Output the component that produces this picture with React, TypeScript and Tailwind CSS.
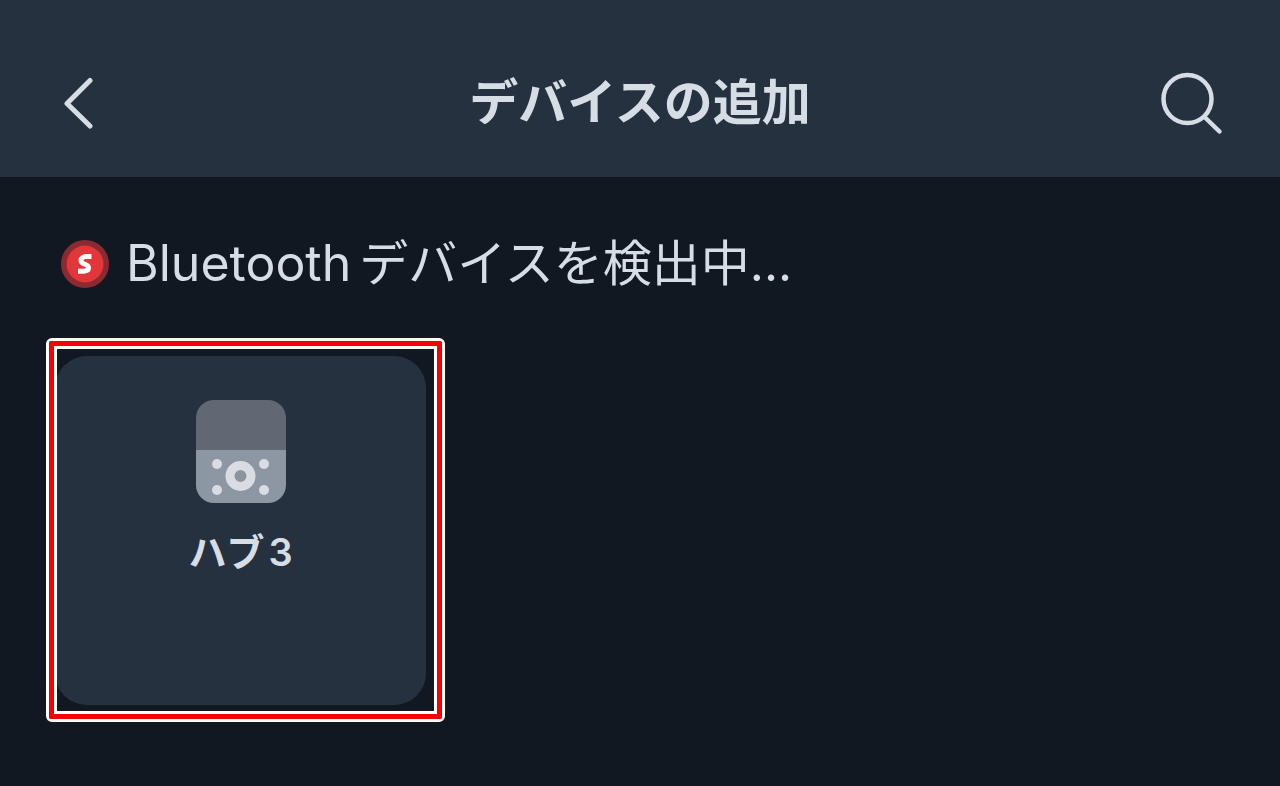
type Device = { id: string; name: string; model: string }

const DEVICES: Device[] = [{ id: 'hub-3', name: 'ハブ', model: '3' }]

function BackIcon() {
  return (
    <svg width="32" height="52" viewBox="0 0 32 52" fill="none" aria-hidden="true">
      <path d="M28 3.500 5 26.500 28 49" stroke="currentColor" strokeWidth="5" strokeLinecap="round" strokeLinejoin="round" />
    </svg>
  )
}

function SearchIcon() {
  return (
    <svg width="64" height="64" viewBox="0 0 64 64" fill="none" aria-hidden="true">
      <circle cx="27.500" cy="28" r="24" stroke="currentColor" strokeWidth="4.500" />
      <path d="M44.500 46 59.500 60.500" stroke="currentColor" strokeWidth="4.500" strokeLinecap="round" />
    </svg>
  )
}

// Pulsing scan badge
function ScanBadge() {
  return (
    <svg width="50" height="50" viewBox="0 0 50 50" aria-hidden="true" className="shrink-0">
      <circle cx="25" cy="25" r="24" fill="#8a2a31" />
      <circle cx="25" cy="25" r="18.500" fill="#e2363a" />
      <path
        d="M31.500 17.600H27C23.500 17.600 21 19 21 21.400C21 23.600 22.800 24.400 25 25.300C27 26.100 28.700 27 28.500 29C28.300 31.200 26 32.200 23.400 32.200H18"
        fill="none"
        stroke="#fff"
        strokeWidth="5"
      />
    </svg>
  )
}

function HubIcon() {
  return (
    <svg width="90" height="104" viewBox="0 0 90 104" aria-hidden="true">
      <path d="M0 50V18A18 18 0 0 1 18 0H72A18 18 0 0 1 90 18V50Z" fill="#616873" />
      <path d="M0 50H90V85A18 18 0 0 1 72 103H18A18 18 0 0 1 0 85Z" fill="#8d96a3" />
      <circle cx="44.500" cy="76" r="10.500" fill="#8e949d" stroke="#d9dde3" strokeWidth="9" />
      <g fill="#d9dde3">
        <circle cx="21" cy="64" r="5" />
        <circle cx="68" cy="64" r="5" />
        <circle cx="21" cy="90" r="5" />
        <circle cx="68" cy="90" r="5" />
      </g>
    </svg>
  )
}

function DeviceCard({ device }: { device: Device }) {
  return (
    <button
      type="button"
      className="-ml-0.5 flex h-[349px] w-[371px] cursor-pointer flex-col items-center rounded-[32px] bg-[#263140] pt-11"
    >
      <HubIcon />
      <span className="mt-6 flex items-baseline gap-1 text-[38px] leading-[48px] font-semibold">
        <span>{device.name}</span>
        <span>{device.model}</span>
      </span>
    </button>
  )
}

export default function App() {
  return (
    <div className="min-h-screen bg-[#121822] font-[Inter,'Noto_Sans_CJK_JP',sans-serif] text-[#d7dde5]">
      <header className="flex items-center justify-between bg-[#263140] px-14 pt-[34px] pb-1.5">
        <button type="button" aria-label="戻る" className="flex h-[137px] w-20 cursor-pointer items-center pl-1.5">
          <BackIcon />
        </button>
        <h1 className="text-[49px] leading-[64px] font-bold">デバイスの追加</h1>
        <button type="button" aria-label="検索" className="flex w-20 cursor-pointer items-center justify-end">
          <SearchIcon />
        </button>
      </header>

      <main className="pt-[54px] pb-16">
        <p className="flex items-center gap-4 px-[60px] text-[49px] leading-[64px]" role="status">
          <ScanBadge />
          <span className="flex items-baseline gap-2">
            <span className="text-[50px]">Bluetooth</span>
            <span>デバイスを検出中...</span>
          </span>
        </p>

        <ul className="mt-[42px] flex flex-wrap gap-6 px-[46px]">
          {DEVICES.map((device) => (
            <li key={device.id} className="rounded-md border-3 border-white">
              <div className="rounded-xs border-5 border-[#f90000]">
                <div className="overflow-hidden border-3 border-white pt-[7px] pr-2 pb-1.5">
                  <DeviceCard device={device} />
                </div>
              </div>
            </li>
          ))}
        </ul>
      </main>
    </div>
  )
}
